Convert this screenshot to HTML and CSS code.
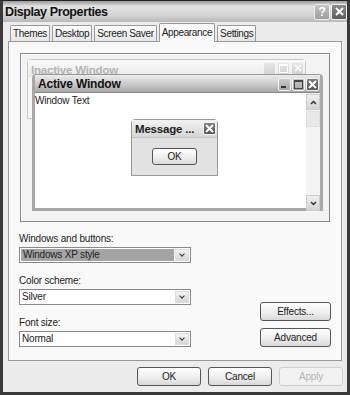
FILE: index.html
```html
<!DOCTYPE html>
<html lang="en">
<head>
    <meta charset="UTF-8">
    <title>Display Properties</title>
    <link rel="stylesheet" href="styles.css">
</head>
<body>
    <div class="window">
        <div class="titlebar">
            <span class="title">Display Properties</span>
            <span class="tbtn help">?</span>
            <span class="tbtn close">
                <svg width="9" height="9" viewBox="0 0 9 9"><path d="M1 1L8 8M8 1L1 8" stroke="#fff" stroke-width="2"/></svg>
            </span>
        </div>

        <div class="tabs">
            <span class="tab">Themes</span>
            <span class="tab">Desktop</span>
            <span class="tab">Screen Saver</span>
            <span class="tab active">Appearance</span>
            <span class="tab">Settings</span>
        </div>

        <div class="panel">
            <div class="preview">
                <div class="win inactive">
                    <div class="win-title">
                        <span>Inactive Window</span>
                        <span class="wbtns">
                            <i class="wb"></i><i class="wb"><b class="max"></b></i><i class="wb">
                                <svg width="8" height="8" viewBox="0 0 8 8"><path d="M1 1L7 7M7 1L1 7" stroke="#fff" stroke-width="1.6"/></svg>
                            </i>
                        </span>
                    </div>
                </div>

                <div class="win active-win">
                    <div class="win-title">
                        <span>Active Window</span>
                        <span class="wbtns">
                            <i class="wb"><b class="min"></b></i><i class="wb"><b class="max"></b></i><i class="wb dark">
                                <svg width="9" height="9" viewBox="0 0 9 9"><path d="M1 1L8 8M8 1L1 8" stroke="#fff" stroke-width="2"/></svg>
                            </i>
                        </span>
                    </div>
                    <div class="win-body">
                        <span class="wtext">Window Text</span>
                        <div class="scroll">
                            <span class="sbtn">
                                <svg width="7" height="5" viewBox="0 0 7 5"><path d="M1 4L3.5 1.5L6 4" stroke="#333" stroke-width="1.5" fill="none"/></svg>
                            </span>
                            <span class="thumb"></span>
                            <span class="track"></span>
                            <span class="sbtn">
                                <svg width="7" height="5" viewBox="0 0 7 5"><path d="M1 1L3.5 3.5L6 1" stroke="#333" stroke-width="1.5" fill="none"/></svg>
                            </span>
                        </div>
                    </div>
                </div>

                <div class="msg">
                    <div class="msg-title">
                        <span>Message ...</span>
                        <i class="wb dark">
                            <svg width="9" height="9" viewBox="0 0 9 9"><path d="M1 1L8 8M8 1L1 8" stroke="#fff" stroke-width="2"/></svg>
                        </i>
                    </div>
                    <div class="msg-body">
                        <span class="btn msg-ok">OK</span>
                    </div>
                </div>
            </div>

            <div class="options">
                <div class="fields">
                    <div class="field">
                        <label>Windows and buttons:</label>
                        <div class="select selected"><span>Windows XP style</span><i class="arrow"></i></div>
                    </div>
                    <div class="field">
                        <label>Color scheme:</label>
                        <div class="select"><span>Silver</span><i class="arrow"></i></div>
                    </div>
                    <div class="field">
                        <label>Font size:</label>
                        <div class="select"><span>Normal</span><i class="arrow"></i></div>
                    </div>
                </div>
                <div class="side">
                    <span class="btn">Effects...</span>
                    <span class="btn">Advanced</span>
                </div>
            </div>
        </div>

        <div class="footer">
            <span class="btn">OK</span>
            <span class="btn">Cancel</span>
            <span class="btn disabled">Apply</span>
        </div>
    </div>
</body>
</html>
```
FILE: styles.css
```css
body {
    margin: 0;
    font-family: "Liberation Sans", Arial, sans-serif;
    font-size: 10px;
    letter-spacing: -0.2px;
    color: #222;
    background-color: #333;
}

.window {
    width: 350px;
    height: 395px;
    box-sizing: border-box;
    border: 3px solid #3a3a3a;
    border-top: 1px solid #222;
    background-color: #ececec;
}

.titlebar {
    height: 21px;
    display: flex;
    align-items: center;
    gap: 1px;
    padding: 0 0 0 2px;
    background: linear-gradient(#9a9a9a, #e2e2e2 25%, #d2d2d2 70%, #b8b8b8);
}

.title {
    flex: 1;
    font-size: 12.5px;
    letter-spacing: -0.4px;
    font-weight: bold;
    color: #111;
}

.tbtn {
    width: 14px;
    height: 14px;
    display: flex;
    align-items: center;
    justify-content: center;
    border: 1px solid #eee;
    border-radius: 2px;
    background: linear-gradient(#c4c4c4, #9c9c9c);
    color: #fff;
    font-weight: bold;
    font-size: 12px;
}

.tbtn.close {
    background: linear-gradient(#8a8a8a, #5c5c5c);
}

.tabs {
    display: flex;
    align-items: flex-end;
    height: 19px;
    padding: 0 0 0 7px;
    gap: 2px;
}

.tab {
    height: 15px;
    padding: 0 2px;
    line-height: 15px;
    letter-spacing: -0.35px;
    color: #222;
    background: linear-gradient(#fdfdfd, #e6e6e6);
    border: 1px solid #999;
    border-bottom: none;
    border-radius: 2px 2px 0 0;
}

.tab.active {
    height: 18px;
    line-height: 17px;
    background: #fafafa;
    margin-bottom: -1px;
    position: relative;
    z-index: 1;
}

.panel {
    height: 320px;
    box-sizing: border-box;
    margin: 0 5px;
    padding: 11px;
    border: 1px solid #999;
    background: #f9f9f9;
}

.preview {
    position: relative;
    height: 169px;
    box-sizing: border-box;
    width: 310px;
    border: 1px solid #888;
    box-shadow: inset 1px 1px 0 #fff;
    background: #f3f3f3;
}

.win {
    position: absolute;
    box-sizing: border-box;
}

.win-title {
    display: flex;
    align-items: center;
    justify-content: space-between;
    height: 16px;
    padding: 0 1px 0 3px;
    font-size: 11.5px;
    font-weight: bold;
}

.inactive {
    left: 6px;
    top: 5px;
    width: 279px;
    height: 60px;
    border: 1px solid #c8c8c8;
    border-radius: 4px 4px 0 0;
    background: #f6f6f6;
}

.inactive .win-title {
    color: #b4b4b4;
    align-items: flex-end;
    padding-bottom: 1px;
    background: linear-gradient(#fafafa, #e8e8e8);
}

.inactive .wbtns {
    align-self: center;
}

.inactive .wb {
    background: linear-gradient(#e6e6e6, #d2d2d2);
    border-color: #f4f4f4;
}

.wbtns {
    display: flex;
    gap: 1px;
}

.wb {
    width: 13px;
    height: 13px;
    box-sizing: border-box;
    display: flex;
    align-items: center;
    justify-content: center;
    border: 1px solid #f2f2f2;
    border-radius: 2px;
    background: linear-gradient(#c8c8c8, #a6a6a6);
}

.wb.dark {
    background: linear-gradient(#7e7e7e, #545454);
}

.min {
    width: 5px;
    height: 2px;
    margin-top: 6px;
    margin-right: 3px;
    background: #333;
}

.max {
    width: 7px;
    height: 6px;
    border: 1px solid #444;
    border-top-width: 2px;
}

.inactive .max {
    border-color: #fff;
}

.active-win {
    left: 11px;
    top: 20px;
    width: 291px;
    height: 137px;
    border: 3px solid #a8a8a8;
    border-top: 1px solid #999;
    border-radius: 4px 4px 0 0;
    background: #fff;
}

.active-win .win-title {
    color: #111;
    font-size: 12px;
    background: linear-gradient(#ececec, #c6c6c6 60%, #a8a8a8);
    padding-top: 1px;
}

.win-body {
    display: flex;
    height: 119px;
    border-top: 1px solid #888;
}

.wtext {
    flex: 1;
    padding: 2px 0 0 0;
}

.scroll {
    width: 14px;
    display: flex;
    flex-direction: column;
    gap: 1px;
    padding: 1px 0;
    background: #f4f4f4;
}

.sbtn {
    height: 14px;
    display: flex;
    align-items: center;
    justify-content: center;
    border: 1px solid #ccc;
    background: linear-gradient(#f0f0f0, #d4d4d4);
}

.thumb {
    height: 14px;
    border: 1px solid #ddd;
    background: #e8e8e8;
}

.track {
    flex: 1;
}

.msg {
    position: absolute;
    left: 110px;
    top: 65px;
    width: 87px;
    height: 57px;
    box-sizing: border-box;
    border: 1px solid #999;
    border-radius: 4px 4px 0 0;
    background: #e2e2e2;
}

.msg-title {
    display: flex;
    align-items: center;
    justify-content: space-between;
    height: 17px;
    padding: 0 1px 0 3px;
    font-size: 11.5px;
    font-weight: bold;
    white-space: nowrap;
    background: linear-gradient(#f2f2f2, #d6d6d6);
    border-bottom: 1px solid #c4c4c4;
}

.msg-body {
    display: flex;
    justify-content: center;
    padding-top: 10px;
}

.btn {
    height: 19px;
    box-sizing: border-box;
    display: flex;
    align-items: center;
    justify-content: center;
    border: 1px solid #555;
    border-radius: 3px;
    background: linear-gradient(#ffffff, #ececec 60%, #d8d8d8);
    color: #222;
}

.msg-ok {
    width: 45px;
    height: 17px;
}

.options {
    display: flex;
    justify-content: space-between;
    margin-top: 10px;
}

.fields {
    width: 172px;
    margin-left: -1px;
}

.field {
    margin-bottom: 11px;
}

.field:last-child {
    margin-bottom: 0;
}

.field label {
    display: block;
    height: 13px;
    line-height: 13px;
    margin-bottom: 2px;
}

.select {
    display: flex;
    height: 16px;
    box-sizing: border-box;
    border: 1px solid #888;
    background: #fff;
}

.select span {
    flex: 1;
    padding-left: 2px;
    line-height: 14px;
}

.select.selected span {
    background: #a4a4a4;
    margin: 1px 0 1px 1px;
    line-height: 12px;
}

.arrow {
    width: 14px;
    margin: 1px;
    background: linear-gradient(#f4f4f4, #d6d6d6);
    border: 1px solid #ddd;
    box-sizing: border-box;
    position: relative;
}

.arrow::after {
    content: "";
    position: absolute;
    left: 4px;
    top: 2px;
    width: 3px;
    height: 3px;
    border-right: 1.5px solid #333;
    border-bottom: 1.5px solid #333;
    transform: rotate(45deg);
}

.side {
    display: flex;
    flex-direction: column;
    justify-content: flex-end;
    gap: 7px;
    margin-right: -1px;
}

.side .btn {
    width: 71px;
}

.footer {
    display: flex;
    justify-content: flex-end;
    gap: 7px;
    padding: 6px 4px 0 0;
}

.footer .btn {
    width: 64px;
}

.footer .btn.disabled {
    color: #b4b4b4;
    border-color: #cfcfcf;
    background: #f2f2f2;
}
```
